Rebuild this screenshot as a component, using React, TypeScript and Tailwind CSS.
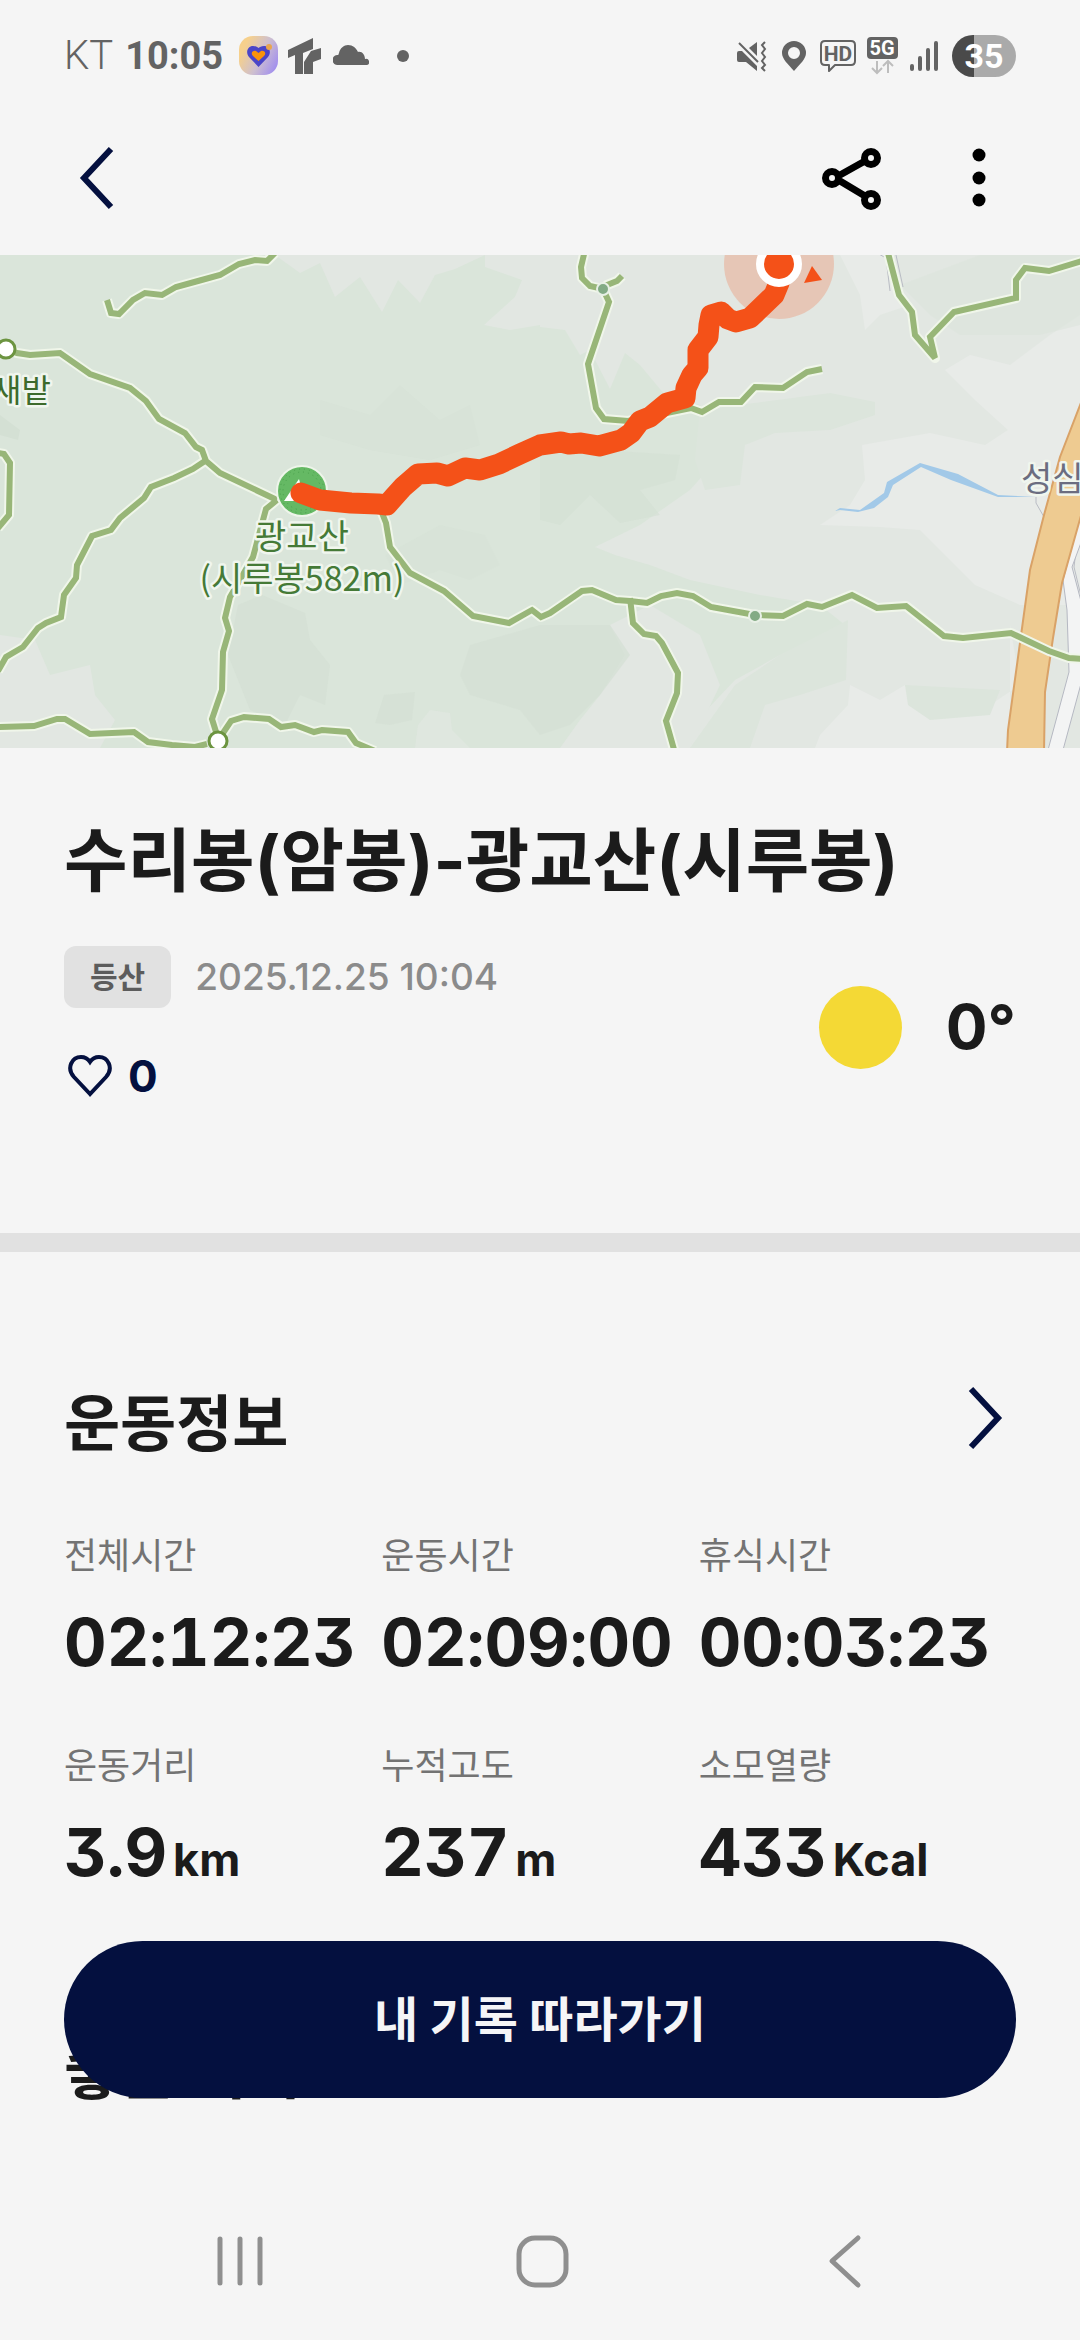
import type { ReactNode } from 'react';

interface Stat {
   label: string;
   value: string;
   unit?: string;
}

const stats: Stat[] = [
   { label: '전체시간', value: '02:12:23' },
   { label: '운동시간', value: '02:09:00' },
   { label: '휴식시간', value: '00:03:23' },
   { label: '운동거리', value: '3.9', unit: 'km' },
   { label: '누적고도', value: '237', unit: 'm' },
   { label: '소모열량', value: '433', unit: 'Kcal' },
];

const trails = [
   '107,45 111,58 119,59 133,45 145,38 162,40 176,32 198,26 220,20 239,9 255,5 267,6 275,-2',
   '6,94 17,98 30,100 60,98 90,119 130,133 146,146 159,164 185,178 196,192 202,195 206,206 220,218 277,245',
   '277,245 266,254 253,302 230,342 225,363 229,376 223,397 222,435 212,464 217,480',
   '205,206 193,214 174,223 151,232 144,243 120,263 111,275 92,281 77,310 76,323 64,340 61,362 46,368 38,373 23,392 6,402 -2,416',
   '-2,198 4,199 10,208 9,260 -2,273',
   '-2,472 34,471 57,464 65,464 90,479 134,477 148,487 172,490 195,492 207,489',
   '223,478 231,466 244,462 269,464 281,472 295,470 314,477 322,475 348,477 356,488 375,496',
   '382,258 386,268 390,292 410,318 444,336 473,361 509,368 532,355 541,362 550,358 582,336 592,335 616,345 630,346 647,348 661,341 677,338 693,341 711,352 755,360 783,361 807,349 822,352 852,340 877,353 906,351 944,381 963,383 1011,378 1049,396 1069,403 1082,404',
   '630,343 633,368 644,379 656,381 662,388 678,418 677,438 666,466 675,498',
   '585,-5 581,12 582,23 590,31 603,34 607,30 617,26 622,21',
   '603,34 609,47 588,109 596,153 604,164 628,166 691,153 702,157 719,147 741,147 755,132 783,133 807,117 822,114',
   '888,-2 899,40 912,57 915,80 935,103 930,82 954,57 1016,43 1016,25 1025,13 1049,16 1082,6',
];

const route =
   '301,238 320,245 351,248 378,249 387,250 394,242 403,232 418,219 437,218 448,221 465,213 480,215 499,209 520,199 540,190 561,187 569,189 581,188 599,191 621,185 631,178 640,166 650,162 667,148 685,143 686,133 692,120 698,113 698,95 708,82 709,70 711,60 721,57 728,64 736,67 750,63 774,40 779,28';

function TrailMap() {
   return (
      <svg viewBox="0 0 1080 493" className="block w-full" role="img" aria-label="등산 경로 지도">
         <rect width="1080" height="493" fill="#dae5da" />
         {/* terrain shading */}
         <g fill="#e2e7e2">
            <path d="M275 0 L300 18 320 8 335 42 360 22 382 57 398 25 420 48 435 20 455 14 485 0Z" />
            <path d="M485 0 L540 0 540 70 510 75 484 70 515 42 522 25 485 12Z" />
            <path d="M540 0 H1080 V493 H690 L700 462 735 425 780 400 845 370 820 350 760 340 690 325 650 310 615 300 595 292 640 270 690 235 730 190 700 150 665 140 640 110 625 98 610 134 590 95 580 100 565 75 540 72Z" />
            <path d="M0 380 L35 385 50 420 90 410 95 440 115 465 100 493 0 493Z" />
            <path d="M610 370 L625 400 600 440 580 465 560 493 690 493 720 430 700 380 650 350Z" />
            <path d="M430 455 L450 458 452 475 470 493 415 493 418 470Z" opacity=".6" />
         </g>
         <g fill="#e8ebe8">
            <path d="M1080 60 L1050 80 1010 110 970 100 945 115 975 145 1008 175 985 190 930 178 862 190 865 225 850 250 820 270 880 272 920 275 945 300 975 330 1020 350 1080 350Z" />
            <path d="M1010 370 L1020 430 990 450 930 445 905 430 880 445 850 430 848 450 820 480 815 493 1010 493Z" />
            <path d="M840 0 L860 40 865 75 880 60 910 50 885 0Z" />
         </g>
         <g fill="#d4e0d4">
            <path d="M238 350 L262 340 305 358 310 385 330 410 325 450 300 440 285 470 250 455 240 430 228 400Z" opacity=".8" />
            <path d="M385 300 L440 270 485 280 500 310 470 325 440 315 400 330Z" opacity=".4" />
            <path d="M470 390 L540 370 610 370 630 400 600 440 570 470 540 480 520 455 470 440 460 420Z" opacity=".7" />
            <path d="M540 200 L600 195 680 200 675 225 640 235 660 260 620 268 590 240 560 270 540 265Z" opacity=".6" />
            <path d="M320 145 L370 160 400 130 440 165 470 150 480 190 430 205 370 195 320 180Z" opacity=".35" />
            <path d="M384 440 L415 437 412 465 390 470 375 468Z" opacity=".7" />
            <path d="M0 160 L20 175 18 185 0 180Z" />
         </g>
         <g fill="#dce5dc">
            <path d="M700 155 L830 138 875 147 875 160 830 175 775 178 745 190 740 230 705 235 695 205Z" />
            <path d="M735 430 L780 400 848 365 846 425 800 440 765 450 750 493 690 493Z" />
            <path d="M905 430 L1000 435 990 460 930 465 908 450Z" />
            <path d="M900 30 L980 0 1080 0 1080 70 1040 80 960 80 930 60Z" opacity=".6" />
         </g>

         <g fill="none" stroke="#b9bcc4" strokeWidth="1">
            <path d="M877 -2 L886 3 890 36 M896 0 L903 32" />
            <path d="M1036 242 L1036 248 1044 262" />
            <path d="M1082 285 L1076 295 1074 312 1082 345" />
         </g>
         <path d="M1063 325 L1067 355 1069 417 1048 495 1063 495 1082 425 1082 350 1072 312 1082 285 1082 255Z" fill="#f3f4f4" stroke="#b5b8c2" />
         <path d="M1082 145 L1060 202 1044 260 1030 315 1008 475 1007 497 1044 497 1045 437 1053 383 1062 328 1082 257Z" fill="#eecb91" stroke="#d9a267" strokeWidth="2" />
         <path d="M835 256 L840 253 860 255 884 238 887 227 920 208 958 219 998 240 1036 242 998 242 951 225 921 212 893 230 888 242 874 253 858 257 840 255Z" fill="#a2c9e8" />

         {trails.map(points => (
            <polyline key={points} points={points} fill="none" stroke="#f0f6ea" strokeWidth="10" strokeLinejoin="round" />
         ))}
         {trails.map(points => (
            <polyline key={points} points={points} fill="none" stroke="#98b678" strokeWidth="6" />
         ))}

         <g fill="#fff" stroke="#6c9440" strokeWidth="3">
            <circle cx="6" cy="94" r="9" />
            <circle cx="218" cy="486" r="9" />
         </g>
         <g fill="#83ab85" stroke="#e8f0e6" strokeWidth="2">
            <circle cx="603" cy="34" r="6" />
            <circle cx="755" cy="361" r="6" />
         </g>

         {/* summit */}
         <circle cx="302" cy="236" r="25" fill="#65b964" stroke="#eef5ea" strokeWidth="2" />
         <circle cx="302" cy="236" r="19" fill="none" stroke="#4aa04c" strokeWidth="1" strokeDasharray="1 4" />
         <circle cx="302" cy="236" r="22" fill="none" stroke="#4aa04c" strokeWidth="1" strokeDasharray="1 4" />
         <path d="M284 246 L299 224 305 246Z" fill="#fff" />

         {/* current position */}
         <circle cx="779" cy="9" r="55" fill="#f4511c" fillOpacity=".22" />
         <polyline points={route} fill="none" stroke="#f45118" strokeWidth="21" strokeLinecap="round" strokeLinejoin="round" />
         <circle cx="779" cy="9" r="19" fill="#f45118" stroke="#fff" strokeWidth="8" />
         <path d="M812 11 L822 25 804 28Z" fill="#f45118" />

         <g className="font-['Noto_Sans_CJK_KR',sans-serif] font-normal" stroke="#f0f6ee" strokeWidth="5" strokeLinejoin="round" paintOrder="stroke">
            <text x="-8" y="147" fontSize="32" fill="#3d6b2c">
               새밭
            </text>
            <text x="302" y="294" fontSize="34" fill="#457a37" textAnchor="middle">
               광교산
            </text>
            <text x="302" y="336" fontSize="34" fill="#457a37" textAnchor="middle">
               (시루봉582m)
            </text>
            <text x="1021" y="236" fontSize="34" fill="#6b6d80">
               성심
            </text>
         </g>
      </svg>
   );
}

function StatusBar() {
   return (
      <div className="flex h-28 items-center justify-between px-16 font-[Roboto,sans-serif] text-[#636363]">
         <div className="flex items-center">
            <span className="text-[40px] font-light">KT</span>
            <span className="ml-3 text-[38px] font-bold">10:05</span>
            <svg className="ml-4 h-10 w-10" viewBox="0 0 40 40">
               <defs>
                  <linearGradient id="appBg" x1="0" y1="0.3" x2="1" y2="0.8">
                     <stop offset="0.1" stopColor="#f6d08c" />
                     <stop offset="0.55" stopColor="#cdbfd0" />
                     <stop offset="1" stopColor="#9f8cf0" />
                  </linearGradient>
               </defs>
               <rect width="39" height="39" rx="14" fill="url(#appBg)" />
               <path d="M19.5 31 L10 21 C6 16 9 10 14 10 C17 10 18 11 19.5 12 C21 11 22 10 25 10 C30 10 33 16 29 21Z" fill="#4a45c8" />
               <path d="M19.5 25 L14 20 C11 17 14 14 17 15 L19.5 17 L22 15 C25 14 28 17 25 20Z" fill="#f9930a" />
               <circle cx="30" cy="11" r="3" fill="#e8a54f" />
            </svg>
            <svg className="ml-2 h-9 w-9" viewBox="0 0 36 36" fill="currentColor">
               <path d="M1 12 L26 0 V11 L16 15 V36 H8 V17 L1 20Z" />
               <path d="M34 10 V21 L26 24 V36 H17 V24 L24 13Z" />
            </svg>
            <svg className="ml-2.5 h-9 w-9" viewBox="0 0 36 36" fill="currentColor">
               <path d="M5 27 A5 5 0 0 1 4 17 C6 17 5 17 6 15 C7 10 11 7 15 7 C20 7 23 10 25 14 C29 13 32 17 32 21 A3 3 0 0 1 34 27Z" />
            </svg>
            <span className="ml-7 h-3 w-3 rounded-full bg-[#636363]" />
         </div>
         <div className="flex items-center">
            <svg className="h-8 w-8" viewBox="0 0 32 32" fill="currentColor">
               <path d="M1 13 Q1 11 3 11 H6 L21 26 V31 L10 22 H3 Q1 22 1 20Z" />
               <path d="M13 8 L21 2 V16Z" />
               <path d="M3 3 L22 22" stroke="currentColor" strokeWidth="2" />
               <path d="M29 2 L26 5 29 9 26 13 29 17 26 21 29 25 26 28 29 31" fill="none" stroke="currentColor" strokeWidth="2" />
            </svg>
            <svg className="ml-3 h-8 w-7" viewBox="0 0 28 32" fill="currentColor" fillRule="evenodd">
               <path d="M14 31 C8 24 2 19 2 13 A12 12 0 0 1 26 13 C26 19 20 24 14 31Z M14 7 A6 6 0 1 0 14 19 A6 6 0 1 0 14 7Z" />
            </svg>
            <svg className="ml-3 h-8 w-9" viewBox="0 0 36 32">
               <path d="M5 1 H31 Q35 1 35 5 V21 Q35 25 31 25 H15 L9 31 V25 H5 Q1 25 1 21 V5 Q1 1 5 1Z" fill="none" stroke="currentColor" strokeWidth="2" strokeLinejoin="round" />
               <text x="18" y="21" fontSize="21" fontWeight="700" textAnchor="middle" fill="currentColor">
                  HD
               </text>
            </svg>
            <svg className="ml-2.5 h-10 w-8" viewBox="0 0 32 40">
               <rect x="1" y="1" width="31" height="22" rx="4" fill="currentColor" />
               <text x="16" y="19" fontSize="20" fontWeight="700" textAnchor="middle" fill="#fff">
                  5G
               </text>
               <path d="M11 25 V37 M6 32 L11 37 16 32 M22 37 V25 M17 30 L22 25 27 30" fill="none" stroke="#bdbdbd" strokeWidth="2" />
            </svg>
            <svg className="ml-3 h-8 w-7" viewBox="0 0 28 32" stroke="currentColor" strokeWidth="4" strokeLinecap="round">
               <path d="M2 26 V29 M10 18 V29 M18 10 V29 M26 3 V29" />
            </svg>
            <div className="ml-3.5 flex h-[42px] w-16 items-center justify-center rounded-full bg-linear-to-r from-[#4a4a4a] from-34% to-[#aaa] to-34% text-[34px] leading-none font-bold text-white">
               35
            </div>
         </div>
      </div>
   );
}

function Chevron({ flip }: { flip?: boolean }) {
   return (
      <svg className={flip ? 'h-16 w-10 rotate-180' : 'h-16 w-10'} viewBox="0 0 40 64" fill="none" stroke="#04103f" strokeWidth="6">
         <path d="M33 3 L6 32 33 61" />
      </svg>
   );
}

function NavButton({ label, children }: { label: string; children: ReactNode }) {
   return (
      <button type="button" aria-label={label}>
         <svg className="h-16 w-16" viewBox="0 0 64 64" fill="none" stroke="#8f8f8f" strokeWidth="5" strokeLinecap="round" strokeLinejoin="round">
            {children}
         </svg>
      </button>
   );
}

export default function App() {
   return (
      <div className="min-h-screen bg-[#f5f5f5] font-[Inter,'Noto_Sans_CJK_KR',sans-serif] text-[#1b1b1b]">
         <StatusBar />
         <header className="flex h-[143px] items-center justify-between px-16 pb-3">
            <button type="button" aria-label="뒤로" className="pl-3.5">
               <Chevron />
            </button>
            <div className="flex items-center gap-16">
               <button type="button" aria-label="공유">
                  <svg className="h-16 w-16" viewBox="0 0 64 64" fill="none" stroke="#000" strokeWidth="7">
                     <path d="M18 29 L43 15 M18 35 L43 50" />
                     <circle cx="10" cy="32" r="6.5" />
                     <circle cx="49" cy="12" r="6.5" />
                     <circle cx="49" cy="54" r="6.5" />
                  </svg>
               </button>
               <button type="button" aria-label="더보기" className="pr-0.5">
                  <svg className="h-16 w-16" viewBox="0 0 64 64">
                     <circle cx="29" cy="9" r="6.5" />
                     <circle cx="29" cy="32" r="6.5" />
                     <circle cx="29" cy="54" r="6.5" />
                  </svg>
               </button>
            </div>
         </header>

         <TrailMap />

         <section className="px-16 pt-16">
            <h1 className="text-[69px] leading-[98px] font-bold">수리봉(암봉)-광교산(시루봉)</h1>
            <div className="mt-9 flex items-center justify-between">
               <div>
                  <div className="flex items-center gap-6">
                     <span className="rounded-xl bg-[#e1e1e1] px-[26px] text-[30px] leading-[62px] font-bold text-[#5c5c5c]">등산</span>
                     <time className="text-[37px] leading-[62px] font-medium text-[#8b8b8b]">2025.12.25 10:04</time>
                  </div>
                  <button type="button" className="mt-9 flex items-center gap-4 text-[44px] leading-[64px] font-bold text-[#04103f]">
                     <svg className="h-12 w-12" viewBox="0 0 48 48" fill="none" stroke="currentColor" strokeWidth="4">
                        <path d="M26 42 L10 25 C2 16 8 5 17 5 C21 5 24 7 26 10 C28 7 31 5 35 5 C44 5 50 16 42 25Z" />
                     </svg>
                     0
                  </button>
               </div>
               <div className="flex items-center gap-11">
                  <span className="h-[83px] w-[83px] rounded-full bg-[#f4d935]" />
                  <span className="text-[62px] leading-[80px] font-bold">0°</span>
               </div>
            </div>
         </section>

         <hr className="mt-[125px] h-[19px] border-0 bg-[#e1e1e1]" />

         <section className="px-16 pt-31">
            <div className="flex items-start justify-between">
               <h2 className="pt-1 text-[61px] leading-[88px] font-bold">운동정보</h2>
               <button type="button" aria-label="운동정보 더보기" className="pt-2.5 pr-3">
                  <Chevron flip />
               </button>
            </div>
            <dl className="mt-15 grid grid-cols-3 gap-y-11">
               {stats.map(stat => (
                  <div key={stat.label}>
                     <dt className="text-[36px] leading-[56px] text-[#737373]">{stat.label}</dt>
                     <dd className="mt-1.5 text-[66px] leading-[104px] font-bold whitespace-nowrap [font-feature-settings:'cv09','tnum','calt'_0]">
                        {stat.value}
                        {stat.unit && <span className="ml-1.5 text-[45px]">{stat.unit}</span>}
                     </dd>
                  </div>
               ))}
            </dl>
         </section>

         <section className="px-16 pt-29">
            <h2 className="text-[61px] leading-[88px] font-bold">좋은 기록</h2>
         </section>

         <div className="fixed inset-x-0 bottom-0">
            <div className="px-16">
               <button type="button" className="h-[157px] w-full rounded-full bg-[#04103f] text-[48px] font-bold text-[#f5f5f7]">
                  내 기록 따라가기
               </button>
            </div>
            <nav className="mt-[84px] flex h-[158px] items-center justify-between px-52">
               <NavButton label="최근 앱">
                  <path d="M12 10 V54 M32 10 V54 M52 10 V54" />
               </NavButton>
               <NavButton label="홈">
                  <rect x="11" y="9" width="47" height="47" rx="16" />
               </NavButton>
               <NavButton label="뒤로">
                  <path d="M50 9 L24 32 50 56" />
               </NavButton>
            </nav>
         </div>
      </div>
   );
}
